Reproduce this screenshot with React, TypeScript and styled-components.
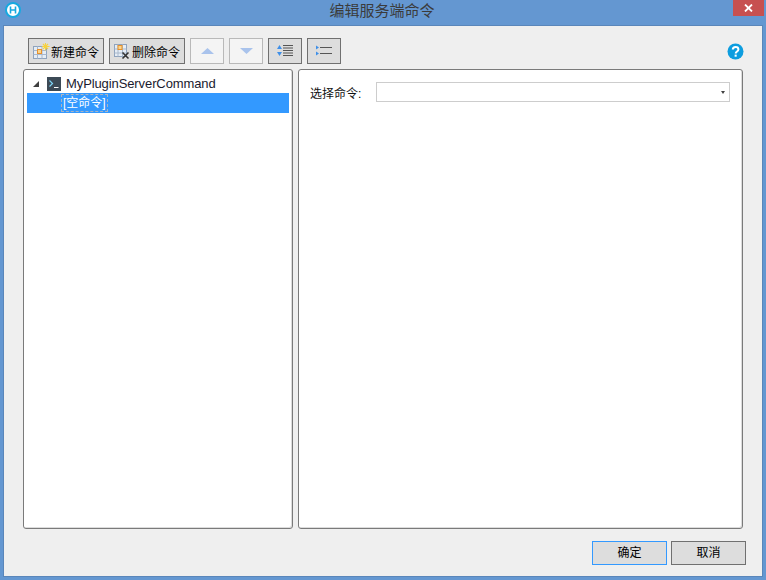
import React from 'react';
import styled, { createGlobalStyle } from 'styled-components';

/* Styles */
const GlobalStyle = createGlobalStyle`
    html, body {
        margin: 0;
        padding: 0;
        background: #6497d1;
    }
    body {
        font-family: "Liberation Sans", "Noto Sans CJK SC", sans-serif;
        font-size: 12px;
        color: #000;
    }
`;

const Window = styled.div`
    width: 766px;
    height: 580px;
    box-sizing: border-box;
    padding: 0 3px 3px 3px;
    background: #6497d1;
    display: flex;
    flex-direction: column;
    overflow: hidden;
`;

const TitleBar = styled.div`
    height: 25px;
    flex: none;
    display: flex;
    align-items: flex-start;
    position: relative;
`;

const AppIcon = styled.svg`
    width: 16px;
    height: 16px;
    margin: 2px 0 0 2px;
    flex: none;
`;

const Title = styled.div`
    position: absolute;
    left: 0;
    right: 2px;
    top: 0;
    height: 21px;
    line-height: 21px;
    text-align: center;
    font-size: 15px;
    color: #3b3b3b;
`;

const CloseButton = styled.div`
    position: absolute;
    top: 0;
    right: -1px;
    width: 31px;
    height: 16px;
    background: #c75050;
    display: flex;
    align-items: center;
    justify-content: center;
`;

const Body = styled.div`
    flex: 1;
    background: #efefef;
    border: 1px solid #5a86ba;
    padding: 12px 18px 9px 19px;
    display: flex;
    flex-direction: column;
    min-height: 0;
`;

const Toolbar = styled.div`
    height: 26px;
    flex: none;
    display: flex;
    align-items: center;
    gap: 5px;
    padding-left: 5px;
    position: relative;
`;

const ToolButton = styled.div<{ $width: number; $disabled?: boolean }>`
    box-sizing: border-box;
    width: ${(props) => props.$width}px;
    height: 26px;
    display: flex;
    align-items: center;
    justify-content: center;
    background: ${(props) => (props.$disabled ? '#f4f4f4' : '#dddddd')};
    border: 1px solid ${(props) => (props.$disabled ? '#b9b9b9' : '#707070')};
    font-size: 12px;
    color: #000;
`;

const LabelButton = styled(ToolButton)`
    justify-content: flex-start;
    gap: 1px;
    padding-left: 4px;
`;

const HelpIcon = styled.svg`
    position: absolute;
    right: 0;
    top: 5px;
    width: 17px;
    height: 17px;
`;

const Panels = styled.div`
    margin-top: 5px;
    height: 460px;
    flex: none;
    display: flex;
    gap: 5px;
`;

const Panel = styled.div<{ $width: number }>`
    box-sizing: border-box;
    width: ${(props) => props.$width}px;
    background: #fff;
    border: 1px solid #7a7a7a;
    border-radius: 3px;
    box-shadow: inset -1px -1px 0 #dcdcdc;
`;

const TreePanel = styled(Panel)`
    padding: 4px 3px;
`;

const TreeRow = styled.div<{ $selected?: boolean }>`
    height: ${(props) => (props.$selected ? 20 : 19)}px;
    display: flex;
    align-items: center;
    background: ${(props) => (props.$selected ? '#3399ff' : 'transparent')};
    color: ${(props) => (props.$selected ? '#fff' : '#1a1a2e')};
    font-size: 13px;
    letter-spacing: ${(props) => (props.$selected ? '0' : '-0.1px')};
`;

const Expander = styled.div`
    width: 0;
    height: 0;
    margin-left: 6px;
    margin-right: 8px;
    border-style: solid;
    border-width: 0 0 6px 6px;
    border-color: transparent transparent #404040 transparent;
`;

const TerminalIcon = styled.svg`
    width: 14px;
    height: 14px;
    margin-right: 5px;
    flex: none;
`;

const EmptyCommand = styled.span`
    margin-left: 34px;
    padding: 0 2px;
    height: 18px;
    line-height: 18px;
    outline: 1px dashed #a9b4c2;
    outline-offset: -1px;
    font-size: 12px;
`;

const FormRow = styled.div`
    display: flex;
    align-items: center;
    padding: 12px 12px 0 11px;
`;

const FormLabel = styled.label`
    width: 66px;
    font-size: 12px;
    color: #111;
    flex: none;
`;

const Combo = styled.div`
    box-sizing: border-box;
    flex: 1;
    height: 20px;
    background: #fff;
    border: 1px solid #cdcdcd;
    display: flex;
    align-items: center;
    justify-content: flex-end;
    padding-right: 4px;
`;

const ComboArrow = styled.div`
    width: 0;
    height: 0;
    border-style: solid;
    border-width: 3px 2.5px 0 2.5px;
    border-color: #404040 transparent transparent transparent;
`;

const Footer = styled.div`
    display: flex;
    justify-content: flex-end;
    gap: 4px;
    margin-top: 12px;
    margin-right: -2px;
`;

const DialogButton = styled.div<{ $focused?: boolean }>`
    box-sizing: border-box;
    width: 75px;
    height: 24px;
    line-height: 22px;
    text-align: center;
    font-size: 12px;
    color: #000;
    background: #dddddd;
    border: 1px solid ${(props) => (props.$focused ? '#3399ff' : '#707070')};
`;

/* Icons */
function NewIcon() {
    return (
        <svg width="17" height="17" viewBox="0 0 17 17">
            <rect x="0.5" y="3.5" width="13" height="12" fill="#e6edf5" stroke="#8fa3bd" />
            <path d="M0.5 7.5h13M0.5 11.5h13M4.5 3.5v12M9 3.5v12" stroke="#a8b8cc" fill="none" />
            <rect x="4.5" y="6.5" width="4" height="4" fill="#fbd58a" stroke="#e8912d" />
            <path d="M12.5 0v7.5M9 3.5h7.5M10 1l5 5M15 1l-5 5" stroke="#f7d23f" strokeWidth="1.1" />
        </svg>
    );
}

function DeleteIcon() {
    return (
        <svg width="17" height="17" viewBox="0 0 17 17">
            <rect x="0.5" y="1.5" width="12" height="12" fill="#e6edf5" stroke="#8fa3bd" />
            <path d="M0.5 6h12M0.5 10h12M4 1.5v12M8.5 1.5v12" stroke="#a8b8cc" fill="none" />
            <rect x="4" y="2.5" width="4" height="4" fill="#fbd58a" stroke="#e8912d" />
            <path d="M8.5 9.5l6 6M14.5 9.5l-6 6" stroke="#333" strokeWidth="1.6" />
        </svg>
    );
}

function ArrowIcon({ down }: { down?: boolean }) {
    return (
        <svg width="13" height="6" viewBox="0 0 13 6">
            <path d={down ? 'M0 0h13L6.5 6z' : 'M6.5 0L13 6H0z'} fill="#a9c3ec" />
        </svg>
    );
}

function IndentIcon() {
    return (
        <svg width="18" height="14" viewBox="0 0 18 14">
            <path d="M1 5l2.5-4L6 5zM1 8l2.5 4L6 8z" fill="#3f8fe8" />
            <path d="M7 1.5h10M7 4h10M7 6.5h10M7 9h10M7 11.5h10" stroke="#555" />
        </svg>
    );
}

function OutdentIcon() {
    return (
        <svg width="16" height="12" viewBox="0 0 16 12">
            <path d="M0 0.5l3 2-3 2zM0 6.5l3 2-3 2z" fill="#3f8fe8" />
            <path d="M4 2.5h12M4 8.5h12" stroke="#555" />
        </svg>
    );
}

/* Main */
export default function App() {
    return (
        <Window>
            <GlobalStyle />
            <TitleBar>
                <AppIcon viewBox="0 0 16 16">
                    <circle cx="8" cy="8" r="7" fill="#fff" stroke="#17a9e0" strokeWidth="2" />
                    <path d="M5.5 4.5v7M10.5 4.5v7M5.5 8h5" stroke="#17a9e0" strokeWidth="1.6" fill="none" />
                </AppIcon>
                <Title>编辑服务端命令</Title>
                <CloseButton>
                    <svg width="9" height="8" viewBox="0 0 9 8">
                        <path d="M1 0.5l7 7M8 0.5l-7 7" stroke="#fff" strokeWidth="1.8" />
                    </svg>
                </CloseButton>
            </TitleBar>
            <Body>
                <Toolbar>
                    <LabelButton $width={76}>
                        <NewIcon />
                        新建命令
                    </LabelButton>
                    <LabelButton $width={76}>
                        <DeleteIcon />
                        删除命令
                    </LabelButton>
                    <ToolButton $width={34} $disabled>
                        <ArrowIcon />
                    </ToolButton>
                    <ToolButton $width={34} $disabled>
                        <ArrowIcon down />
                    </ToolButton>
                    <ToolButton $width={34}>
                        <IndentIcon />
                    </ToolButton>
                    <ToolButton $width={34}>
                        <OutdentIcon />
                    </ToolButton>
                    <HelpIcon viewBox="0 0 17 17">
                        <circle cx="8.5" cy="8.5" r="8" fill="#0d9ddf" />
                        <path d="M5.8 6.6c0-1.7 1.2-2.6 2.8-2.6s2.8 0.9 2.8 2.4c0 2-2.7 2.1-2.7 4" fill="none" stroke="#fff" strokeWidth="2" />
                        <rect x="7.6" y="11.6" width="2.1" height="2.1" fill="#fff" />
                    </HelpIcon>
                </Toolbar>
                <Panels>
                    <TreePanel $width={270}>
                        <TreeRow>
                            <Expander />
                            <TerminalIcon viewBox="0 0 14 14">
                                <rect width="14" height="14" fill="#3c4a56" />
                                <path d="M2.5 3.5l3 3-3 3" stroke="#7fd4f5" strokeWidth="1.2" fill="none" />
                                <path d="M7 10.5h4.5" stroke="#fff" />
                            </TerminalIcon>
                            MyPluginServerCommand
                        </TreeRow>
                        <TreeRow $selected>
                            <EmptyCommand>[空命令]</EmptyCommand>
                        </TreeRow>
                    </TreePanel>
                    <Panel $width={445}>
                        <FormRow>
                            <FormLabel>选择命令:</FormLabel>
                            <Combo>
                                <ComboArrow />
                            </Combo>
                        </FormRow>
                    </Panel>
                </Panels>
                <Footer>
                    <DialogButton $focused>确定</DialogButton>
                    <DialogButton>取消</DialogButton>
                </Footer>
            </Body>
        </Window>
    );
}
